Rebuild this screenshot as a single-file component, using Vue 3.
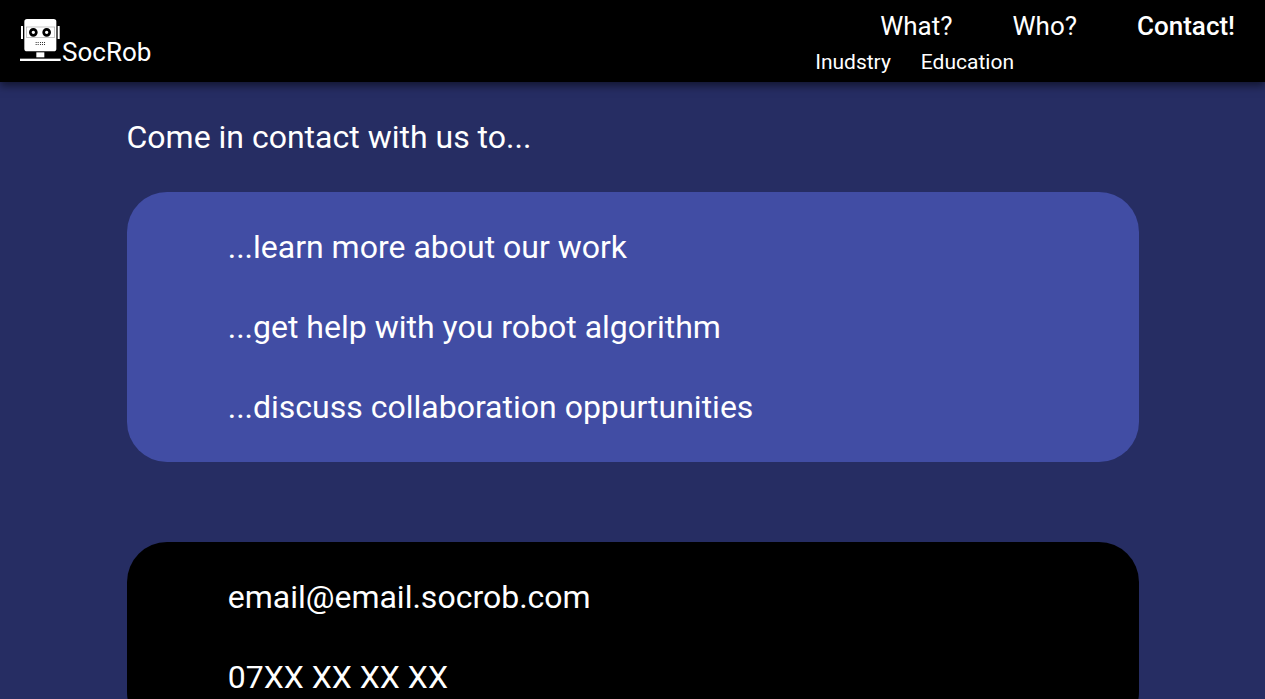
<script setup>
const mainLinks = [
  { label: 'What?', current: false },
  { label: 'Who?', current: false },
  { label: 'Contact!', current: true },
]
const subLinks = ['Inudstry', 'Education']
const reasons = [
  '...learn more about our work',
  '...get help with you robot algorithm',
  '...discuss collaboration oppurtunities',
]
const mouthColumns = [47, 53, 60, 66, 72]
</script>

<template>
  <div class="page">
    <header class="topbar">
      <a class="brand" href="#">
        <svg class="logo" viewBox="0 0 126 132" aria-hidden="true">
          <rect x="13" y="3" width="96" height="97" rx="8" fill="#fff" />
          <rect x="19" y="27" width="85" height="31" fill="none" stroke="#aaa" stroke-width="2" />
          <circle cx="40" cy="43" r="9" fill="#fff" stroke="#000" stroke-width="8" />
          <circle cx="80" cy="43" r="9" fill="#fff" stroke="#000" stroke-width="8" />
          <g fill="#333">
            <rect v-for="x in mouthColumns" :key="'a' + x" :x="x" y="72" width="3" height="3" />
            <rect v-for="x in mouthColumns" :key="'b' + x" :x="x" y="78" width="3" height="3" />
          </g>
          <rect x="3" y="24" width="6" height="39" fill="#fff" />
          <rect x="113" y="24" width="6" height="39" fill="#fff" />
          <rect x="49" y="103" width="24" height="15" fill="#fff" />
          <rect x="0" y="122" width="122" height="7" fill="#fff" />
        </svg>
        <span class="name">SocRob</span>
      </a>
      <nav class="nav">
        <ul class="main-links">
          <li v-for="link in mainLinks" :key="link.label">
            <a href="#" :class="{ current: link.current }">{{ link.label }}</a>
          </li>
        </ul>
        <ul class="sub-links">
          <li v-for="label in subLinks" :key="label"><a href="#">{{ label }}</a></li>
        </ul>
      </nav>
    </header>

    <main class="content">
      <h1>Come in contact with us to...</h1>
      <section class="card reasons">
        <p v-for="reason in reasons" :key="reason">{{ reason }}</p>
      </section>
      <section class="card contact">
        <p>email@email.socrob.com</p>
        <p>07XX XX XX XX</p>
      </section>
    </main>
  </div>
</template>

<style>
html,
body {
  background: #262d63;
}
body {
  overflow: hidden;
}
</style>

<style scoped>
.page {
  height: 100vh;
  overflow: hidden;
  background: #262d63;
  color: #fff;
  font-family: Roboto, "Liberation Sans", sans-serif;
}
a {
  color: inherit;
  text-decoration: none;
}
ul {
  margin: 0;
  padding: 0;
  list-style: none;
  display: flex;
  justify-content: flex-end;
}
.topbar {
  display: flex;
  justify-content: space-between;
  align-items: flex-start;
  height: 82px;
  background: #000;
  box-shadow: 0 4px 8px rgba(0, 0, 0, 0.5);
}
.brand {
  display: flex;
  align-items: flex-end;
  padding: 18px 0 0 20px;
}
.logo {
  width: 42px;
  height: 44px;
}
.name {
  font-size: 26px;
  line-height: 20px;
}
.main-links {
  gap: 60px;
  padding: 6px 30px 0 0;
  font-size: 26px;
  line-height: 40px;
}
.current {
  font-weight: 500;
}
.sub-links {
  gap: 30px;
  padding-right: 251px;
  font-size: 21px;
  line-height: 32px;
}
.content {
  width: 80%;
  margin: 0 auto;
  padding-top: 30px;
}
h1,
p {
  margin: 0;
  font-size: 32px;
  font-weight: 400;
  line-height: 50px;
}
.card {
  display: flex;
  flex-direction: column;
  gap: 30px;
  padding: 30px 10%;
  border-radius: 40px;
}
.reasons {
  margin: 30px 0 80px;
  background: #414da4;
}
.contact {
  background: #000;
}
</style>
